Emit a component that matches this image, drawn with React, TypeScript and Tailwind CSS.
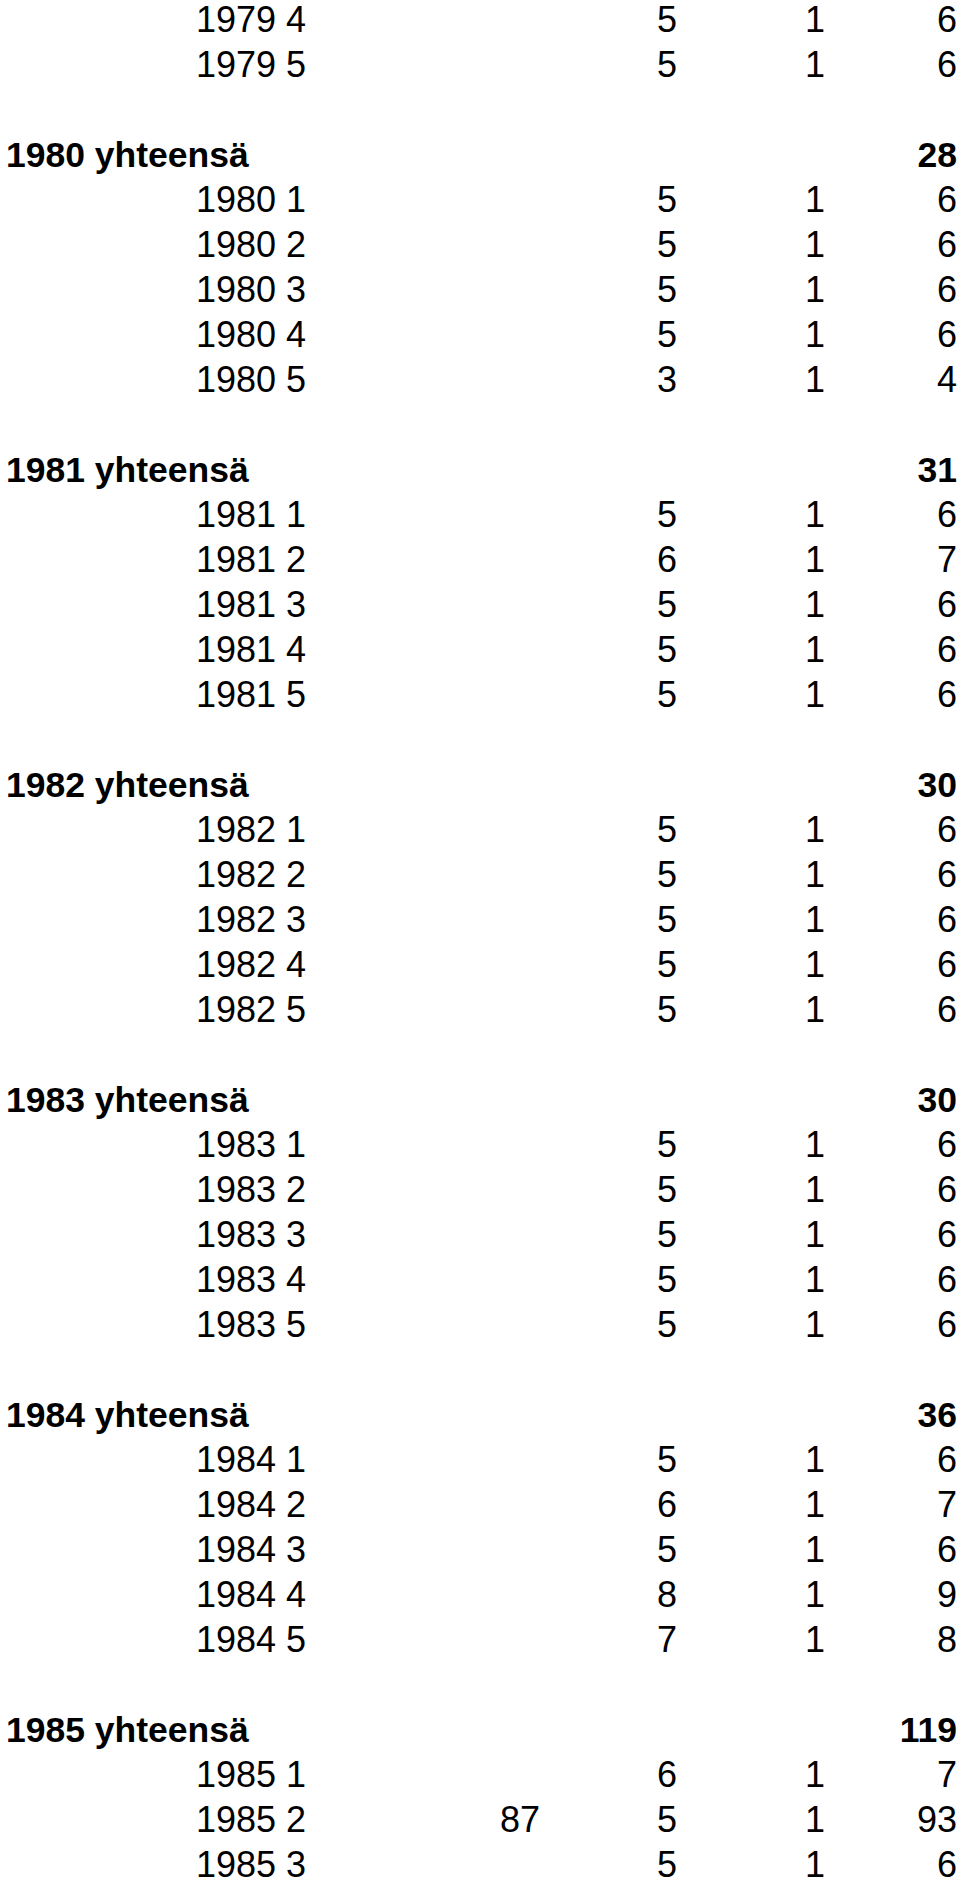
type Row = { label: string; a?: string; b?: string; c?: string; total: string };

type Group = { year: string; total?: string; rows: Row[] };

const std = (label: string, b = "5", total = "6"): Row => ({ label, b, c: "1", total });

const groups: Group[] = [
  { year: "1979", rows: [std("1979 4"), std("1979 5")] },
  {
    year: "1980",
    total: "28",
    rows: [std("1980 1"), std("1980 2"), std("1980 3"), std("1980 4"), std("1980 5", "3", "4")],
  },
  {
    year: "1981",
    total: "31",
    rows: [std("1981 1"), std("1981 2", "6", "7"), std("1981 3"), std("1981 4"), std("1981 5")],
  },
  {
    year: "1982",
    total: "30",
    rows: [std("1982 1"), std("1982 2"), std("1982 3"), std("1982 4"), std("1982 5")],
  },
  {
    year: "1983",
    total: "30",
    rows: [std("1983 1"), std("1983 2"), std("1983 3"), std("1983 4"), std("1983 5")],
  },
  {
    year: "1984",
    total: "36",
    rows: [
      std("1984 1"),
      std("1984 2", "6", "7"),
      std("1984 3"),
      std("1984 4", "8", "9"),
      std("1984 5", "7", "8"),
    ],
  },
  {
    year: "1985",
    total: "119",
    rows: [std("1985 1", "6", "7"), { label: "1985 2", a: "87", b: "5", c: "1", total: "93" }, std("1985 3")],
  },
];

const rowCls = "grid grid-cols-[1fr_140px_137px_148px_132px] h-[45px] leading-[40px] whitespace-nowrap";

function DataRow({ row }: { row: Row }) {
  return (
    <div className={rowCls}>
      <div className="pl-[190px]">{row.label}</div>
      <div className="text-right">{row.a}</div>
      <div className="text-right">{row.b}</div>
      <div className="text-right">{row.c}</div>
      <div className="text-right">{row.total}</div>
    </div>
  );
}

export default function App() {
  return (
    <div className="h-[1878px] overflow-hidden bg-white">
      <div
        className="text-black text-[36px] pl-[6px] pr-[3px]"
        style={{ fontFamily: '"Liberation Sans", Arial, sans-serif' }}
      >
        {groups.map((g, gi) => (
          <div key={g.year}>
            {gi > 0 && <div className="h-[45px]" />}
            {g.total && (
              <div className={rowCls + " font-bold text-[35.5px]"}>
                <div>{g.year} yhteensä</div>
                <div />
                <div />
                <div />
                <div className="text-right">{g.total}</div>
              </div>
            )}
            {g.rows.map((r) => (
              <DataRow key={r.label} row={r} />
            ))}
          </div>
        ))}
      </div>
    </div>
  );
}
